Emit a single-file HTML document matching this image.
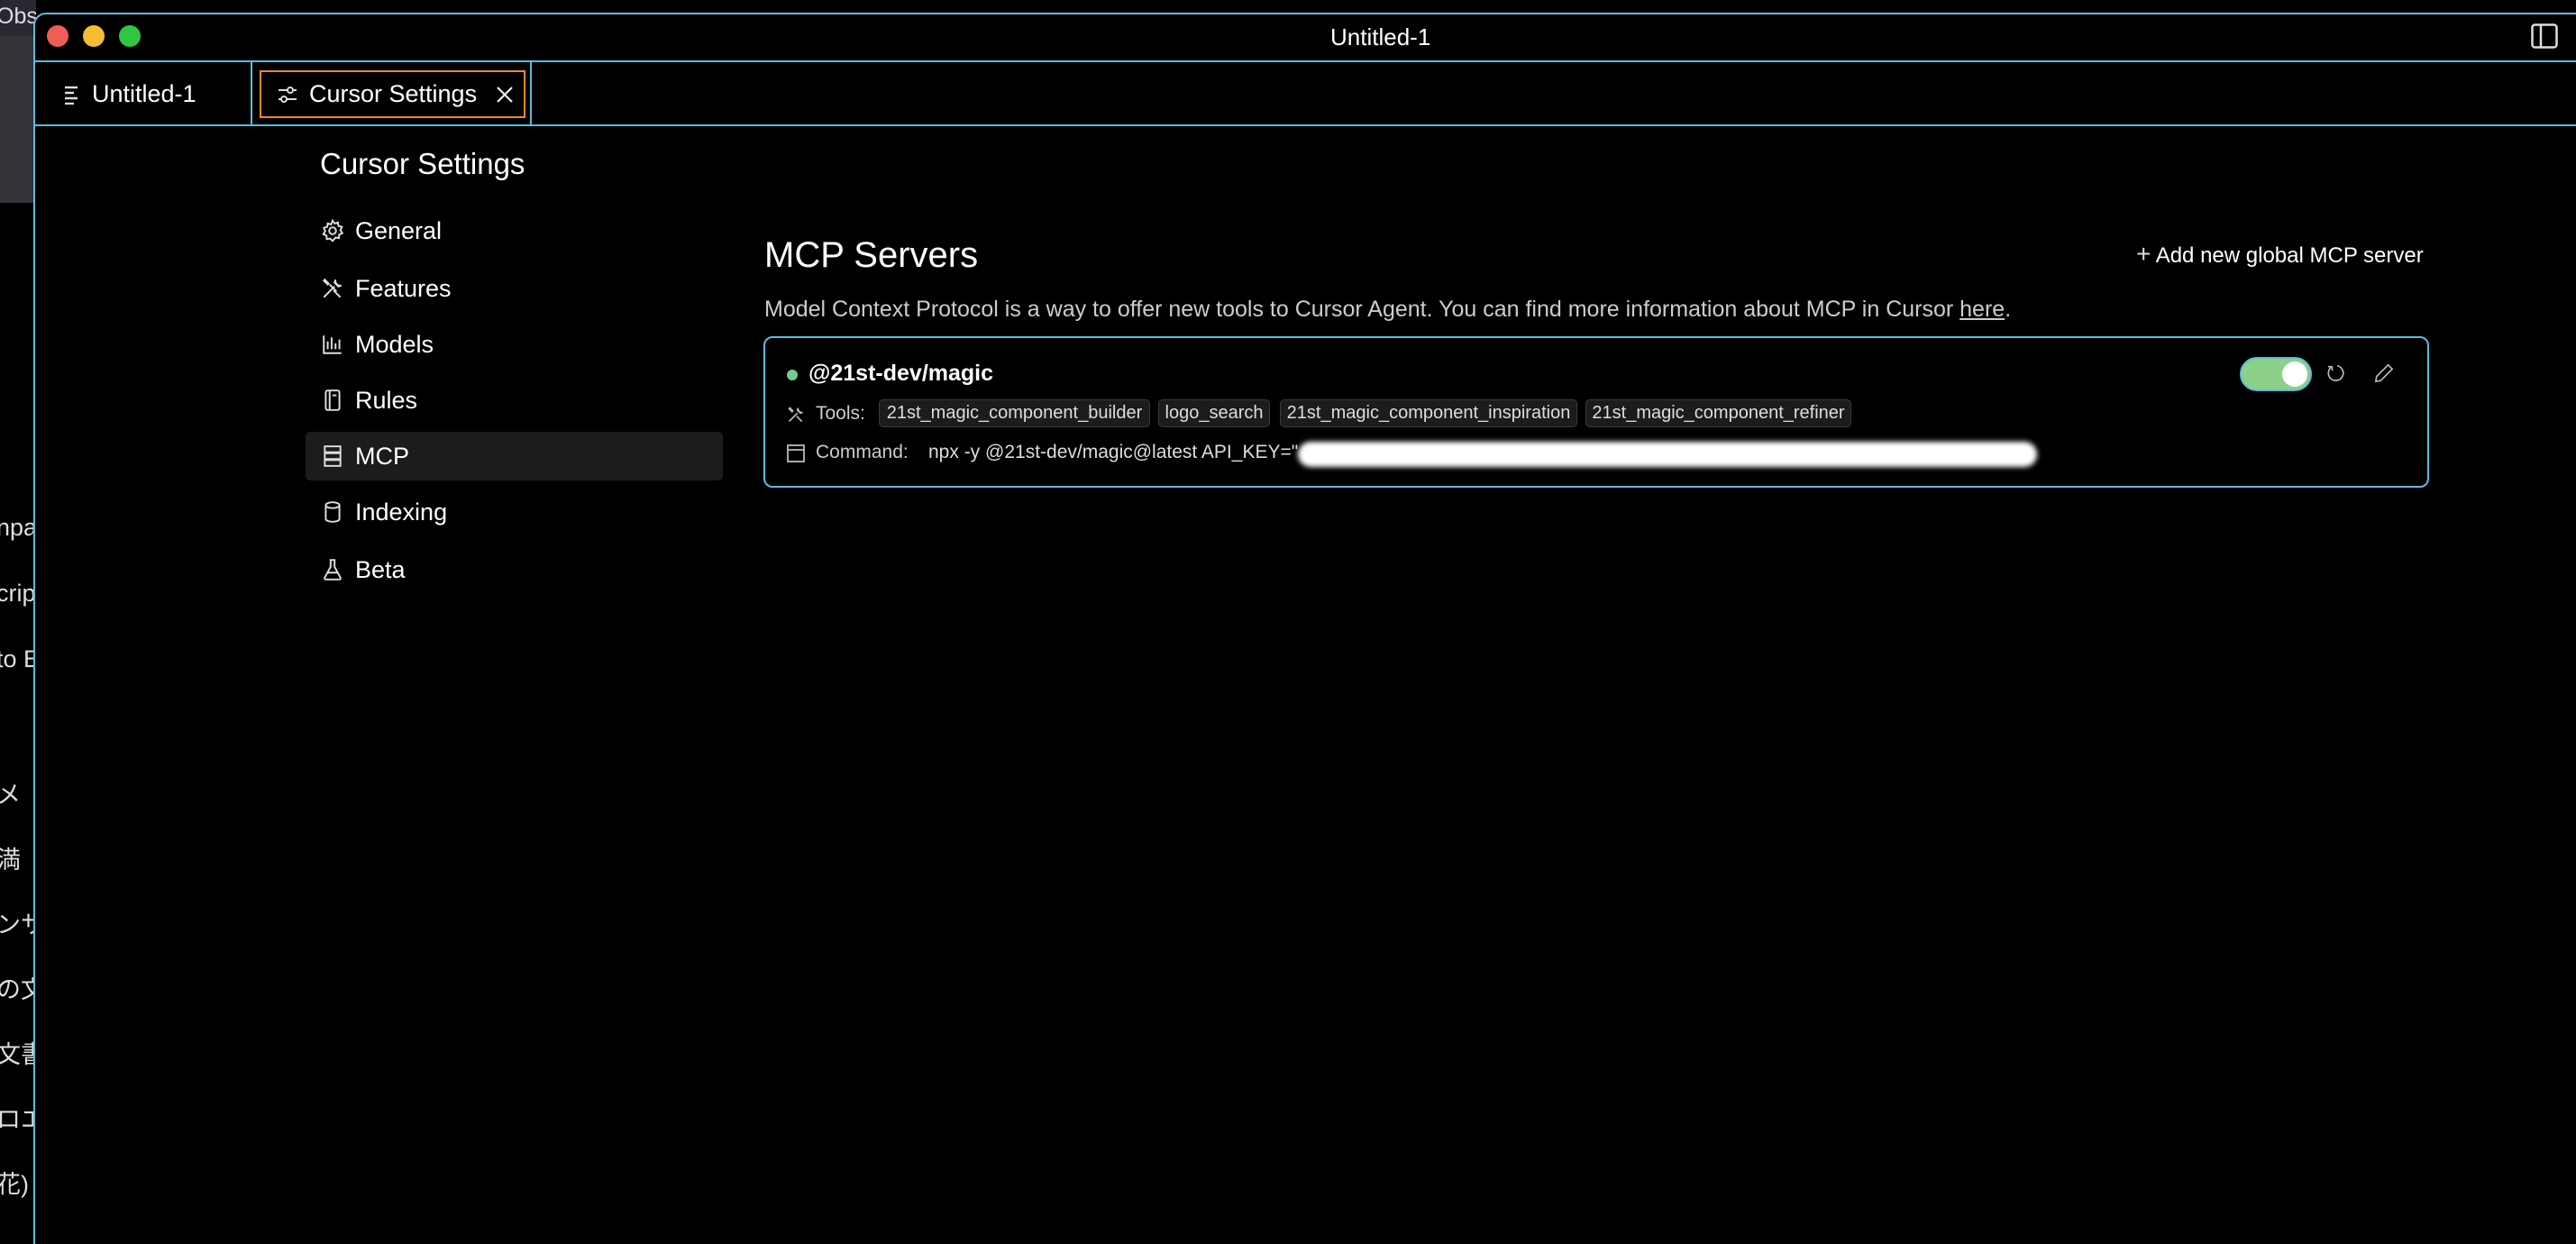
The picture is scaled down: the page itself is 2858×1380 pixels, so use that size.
<!DOCTYPE html>
<html style="overflow:hidden;width:2858px;height:1380px"><head><meta charset="utf-8"><style>
*{margin:0;padding:0;box-sizing:border-box}
body{width:2858px;height:1380px;background:#000;overflow:hidden;position:relative;font-family:"Liberation Sans","Noto Sans CJK JP",sans-serif;color:#fff}
.a{position:absolute;white-space:nowrap}
.side{position:absolute;left:0;top:0;width:40px;height:1380px;background:#000;overflow:hidden}
.jp{position:absolute;left:-4px;font-size:27px;color:#ddd;white-space:nowrap}
.item{position:absolute;left:356px;font-size:27px;display:flex;align-items:center;height:40px}
.item svg{margin-right:12px}
.chip{position:absolute;top:443px;height:31px;background:#1c1c1c;border:1px solid #3a3a3a;border-radius:5px;font-size:20px;color:#ddd;line-height:29px;text-align:center;white-space:nowrap}
</style></head><body>
<div class="side">
 <div class="a" style="left:0;top:0;width:40px;height:225px;background:#36323a"></div>
 <div class="a" style="left:0;top:0;width:40px;height:40px;background:#2a2730"></div>
 <div class="jp" style="top:4px;font-size:25px">Obs</div>
 <div class="jp" style="top:570px">npa</div>
 <div class="jp" style="top:643px">crip</div>
 <div class="jp" style="top:716px">to E</div>
 <div class="jp" style="top:860px">メ</div>
 <div class="jp" style="top:932px">満</div>
 <div class="jp" style="top:1004px">ンサ</div>
 <div class="jp" style="top:1076px">の文</div>
 <div class="jp" style="top:1148px">文書</div>
 <div class="jp" style="top:1220px">ロエ</div>
 <div class="jp" style="top:1292px">花)</div>
</div>
<!-- window -->
<div class="a" style="left:37px;top:14px;width:2821px;height:1366px;border:2px solid #5bbcdc;border-right:none;border-bottom:none;border-radius:14px 0 0 0;background:#000"></div>
<div class="a" style="left:52px;top:28px;width:24px;height:24px;border-radius:50%;background:#ee5d56"></div>
<div class="a" style="left:92px;top:28px;width:24px;height:24px;border-radius:50%;background:#f6bd2e"></div>
<div class="a" style="left:132px;top:28px;width:24px;height:24px;border-radius:50%;background:#2fc643"></div>
<div class="a" style="left:1476px;top:26px;font-size:26px">Untitled-1</div>
<svg class="a" style="left:2808px;top:26px" width="30" height="28" viewBox="0 0 30 28"><rect x="1.5" y="1.5" width="27" height="25" rx="3" fill="none" stroke="#ddd" stroke-width="2.5"/><line x1="11" y1="2" x2="11" y2="26" stroke="#ddd" stroke-width="2.5"/></svg>
<!-- tab bar -->
<div class="a" style="left:37px;top:67px;width:2821px;height:73px;border-top:2px solid #5bbcdc;border-bottom:2px solid #5bbcdc"></div>
<div class="a" style="left:278px;top:67px;width:2px;height:73px;background:#5bbcdc"></div>
<div class="a" style="left:588px;top:67px;width:2px;height:73px;background:#5bbcdc"></div>
<div class="a" style="left:288px;top:78px;width:295px;height:53px;border:2px solid #f08a1c"></div>
<svg class="a" style="left:72px;top:94px" width="18" height="22"><g stroke="#ddd" stroke-width="2.5"><line x1="0" y1="3" x2="14" y2="3"/><line x1="0" y1="9" x2="10" y2="9"/><line x1="0" y1="15" x2="14" y2="15"/><line x1="0" y1="21" x2="10" y2="21"/></g></svg>
<div class="a" style="left:102px;top:89px;font-size:27px">Untitled-1</div>
<svg class="a" style="left:307px;top:93px" width="24" height="24" viewBox="0 0 24 24" fill="none" stroke="#ddd" stroke-width="2"><line x1="2" y1="7" x2="22" y2="7"/><circle cx="15" cy="7" r="3" fill="#000"/><line x1="2" y1="17" x2="22" y2="17"/><circle cx="8" cy="17" r="3" fill="#000"/></svg>
<div class="a" style="left:343px;top:89px;font-size:27px">Cursor Settings</div>
<svg class="a" style="left:550px;top:95px" width="20" height="20" stroke="#eee" stroke-width="2.2"><line x1="2" y1="2" x2="18" y2="18"/><line x1="18" y1="2" x2="2" y2="18"/></svg>
<!-- sidebar -->
<div class="a" style="left:355px;top:163px;font-size:33px">Cursor Settings</div>
<div class="a" style="left:339px;top:479px;width:463px;height:54px;background:#1c1c1c;border-radius:5px"></div>
<div class="item" style="top:236px"><svg width="26" height="26" viewBox="0 0 24 24" fill="none" stroke="#ddd" stroke-width="1.8"><circle cx="12" cy="12" r="3.5"/><path d="M12 1.5l2 3 3.5-1 .5 3.5 3.5 1-1.5 3.5 2 3-3.3 1.5-.2 3.5-3.5-.5L12 22.5l-2.5-2.5-3.5.5-.2-3.5L2.5 15.5l2-3L3 9l3.5-1 .5-3.5 3.5 1z"/></svg>General</div>
<div class="item" style="top:300px"><svg width="26" height="26" viewBox="0 0 24 24" fill="none" stroke="#ddd" stroke-width="1.8"><path d="M3 21L14 10M15 3a5 5 0 006 6l-3 1-4-4zM4 3l4 4-1 1-4-4zM13 14l7 7M9 8l7 7"/></svg>Features</div>
<div class="item" style="top:362px"><svg width="26" height="26" viewBox="0 0 24 24" fill="none" stroke="#ddd" stroke-width="1.8"><path d="M3 3v18h18M7 17V9M11 17V5M15 17v-6M19 17V7"/></svg>Models</div>
<div class="item" style="top:424px"><svg width="26" height="26" viewBox="0 0 24 24" fill="none" stroke="#ddd" stroke-width="1.8"><rect x="5" y="2" width="14" height="20" rx="2"/><path d="M9 2v20M12 7h4"/></svg>Rules</div>
<div class="item" style="top:486px"><svg width="26" height="26" viewBox="0 0 24 24" fill="none" stroke="#ddd" stroke-width="1.8"><rect x="4" y="2" width="16" height="6"/><rect x="4" y="9" width="16" height="6"/><rect x="4" y="16" width="16" height="6"/></svg>MCP</div>
<div class="item" style="top:548px"><svg width="26" height="26" viewBox="0 0 24 24" fill="none" stroke="#ddd" stroke-width="1.8"><ellipse cx="12" cy="5" rx="7" ry="3"/><path d="M5 5v14c0 1.7 3 3 7 3s7-1.3 7-3V5"/></svg>Indexing</div>
<div class="item" style="top:612px"><svg width="26" height="26" viewBox="0 0 24 24" fill="none" stroke="#ddd" stroke-width="1.8"><path d="M9 2h6M10 2v7L4 20c-.5 1 0 2 1 2h14c1 0 1.5-1 1-2L14 9V2M7 15h10"/></svg>Beta</div>
<!-- main -->
<div class="a" style="left:848px;top:261px;font-size:40px">MCP Servers</div>
<div class="a" style="left:2370px;top:266px;font-size:24px"><span style="font-size:28px;color:#ddd">+</span> Add new global MCP server</div>
<div class="a" style="left:848px;top:329px;font-size:25px;color:#ccc">Model Context Protocol is a way to offer new tools to Cursor Agent. You can find more information about MCP in Cursor <span style="text-decoration:underline">here</span>.</div>
<div class="a" style="left:847px;top:373px;width:1848px;height:168px;border:2px solid #5bbcdc;border-radius:10px"></div>
<div class="a" style="left:873px;top:410px;width:12px;height:12px;border-radius:50%;background:#6fcf8a"></div>
<div class="a" style="left:897px;top:400px;font-size:25px;font-weight:bold">@21st-dev/magic</div>
<svg class="a" style="left:873px;top:450px" width="20" height="20" viewBox="0 0 24 24" fill="none" stroke="#bbb" stroke-width="2"><path d="M3 21L14 10M15 3a5 5 0 006 6l-3 1-4-4zM4 3l4 4-1 1-4-4zM13 14l7 7"/></svg>
<div class="a" style="left:905px;top:447px;font-size:21px;color:#ccc">Tools:</div>
<div class="chip" style="left:975px;width:301px">21st_magic_component_builder</div>
<div class="chip" style="left:1285px;width:124px">logo_search</div>
<div class="chip" style="left:1420px;width:330px">21st_magic_component_inspiration</div>
<div class="chip" style="left:1759px;width:295px">21st_magic_component_refiner</div>
<svg class="a" style="left:873px;top:493px" width="20" height="20"><rect x="1" y="1" width="18" height="18" fill="none" stroke="#bbb" stroke-width="1.8"/><line x1="1" y1="6" x2="19" y2="6" stroke="#bbb" stroke-width="1.8"/></svg>
<div class="a" style="left:905px;top:490px;font-size:21px;color:#ccc">Command:</div>
<div class="a" style="left:1030px;top:490px;font-size:21px;color:#ddd">npx -y @21st-dev/magic@latest API_KEY="</div>
<div class="a" style="left:1440px;top:490px;width:820px;height:28px;background:#fff;border-radius:14px;filter:blur(3px)"></div>
<div class="a" style="left:2485px;top:396px;width:80px;height:38px;border-radius:19px;background:#8dd08a;border:2px solid #5bbcdc"></div>
<div class="a" style="left:2532px;top:401px;width:28px;height:28px;border-radius:50%;background:#fff"></div>
<svg class="a" style="left:2582px;top:403px" width="22" height="22" viewBox="0 0 24 24" fill="none" stroke="#bbb" stroke-width="1.8"><path d="M6 4A9 9 0 1 0 12 3M6 4v5M6 4H1"/></svg>
<svg class="a" style="left:2634px;top:403px" width="22" height="22" viewBox="0 0 24 24" fill="none" stroke="#bbb" stroke-width="1.8"><path d="M17 2l5 5L8 21l-6 1 1-6z"/></svg>
</body></html>
